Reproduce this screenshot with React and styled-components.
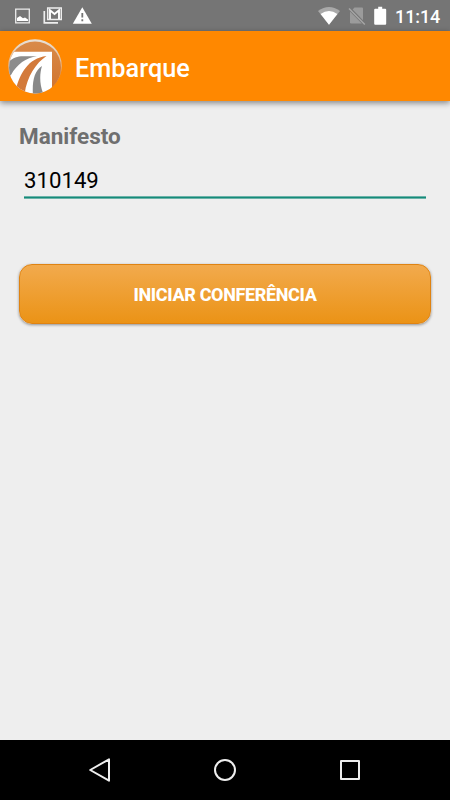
import styled, { createGlobalStyle } from 'styled-components';

const GlobalStyle = createGlobalStyle`
    * {
        box-sizing: border-box;
    }

    body {
        margin: 0;
        background: #eee;
        font-family: Roboto, sans-serif;
    }
`;

const Screen = styled.div`
    display: flex;
    flex-direction: column;
    height: 100vh;
    background: #eee;
`;

const StatusBar = styled.div`
    display: flex;
    justify-content: space-between;
    flex: none;
    height: 31px;
    padding: 0 10px 0 12px;
    background: #757575;
`;

const StatusGroup = styled.div`
    display: flex;
    align-items: center;
    gap: ${({ $gap }) => $gap}px;
`;

const Clock = styled.span`
    width: 45px;
    color: #fff;
    font-size: 18px;
    font-weight: 500;
    line-height: 31px;
    letter-spacing: -0.1px;
    padding-top: 2px;
`;

const AppBar = styled.header`
    display: flex;
    align-items: center;
    flex: none;
    gap: 13px;
    height: 70px;
    padding: 2px 8px 0;
    background: #ff8800;
    box-shadow: 0 2px 6px rgba(0, 0, 0, 0.45);
`;

const Title = styled.h1`
    margin: 4px 0 0;
    color: #fff;
    font-size: 25.3px;
    font-weight: 500;
    line-height: 30px;
`;

const Content = styled.main`
    display: flex;
    flex-direction: column;
    flex: 1;
    padding: 21px 19px 0;
`;

const Label = styled.label`
    color: #6f6f6f;
    font-size: 22.5px;
    font-weight: 700;
    line-height: 28px;
`;

const Input = styled.input`
    height: 37px;
    margin: 12px 5px 0;
    padding: 0 0 1px;
    border: 0;
    outline: 0;
    background: linear-gradient(#6bb3a9 1px, #158a79 1px 2px, #6bb3a9 2px) bottom / 100% 3px no-repeat;
    color: #000;
    font-family: inherit;
    font-size: 22.2px;
`;

const Button = styled.button`
    height: 60px;
    margin-top: 65px;
    padding: 0;
    border: 1px solid #df8312;
    border-radius: 13px;
    background: linear-gradient(#f2aa4d, #eb9316);
    box-shadow: 0 1px 3px rgba(0, 0, 0, 0.4);
    color: #fff;
    font-family: inherit;
    font-size: 18px;
    font-weight: 800;
    letter-spacing: -0.35px;
`;

const NavBar = styled.nav`
    display: flex;
    align-items: center;
    justify-content: center;
    flex: none;
    gap: 101px;
    height: 60px;
    background: #000;
`;

const Logo = () => (
    <svg width="54" height="58" viewBox="0 0 54 58">
        <defs>
            <clipPath id="disc">
                <circle cx="27" cy="29.5" r="26" />
            </clipPath>
            <linearGradient id="copper" x1="0" y1="0" x2="0" y2="1">
                <stop offset="0" stopColor="#d98c4c" />
                <stop offset="1" stopColor="#d0712a" />
            </linearGradient>
            <linearGradient id="rim" x1="0" y1="0" x2="0" y2="1">
                <stop offset="0" stopColor="#e8e2da" />
                <stop offset="0.7" stopColor="#dfa26b" />
            </linearGradient>
        </defs>
        <circle cx="27" cy="28" r="26.8" fill="url(#rim)" />
        <g clipPath="url(#disc)">
            <rect width="54" height="58" fill="url(#copper)" />
            <path d="M0 13.7H44V58H0Z" fill="#fff" />
            <path d="M0 25C4 20 9 18.3 15 18.3H29C18 20 9 26 3 37L0 38Z" fill="#8c8c8c" />
            <path d="M8 51C12 36 20 20 38.5 18C28 25 18.5 39 16.5 57Z" fill="#d37a3b" />
            <path d="M25 58C24 44 26 33 34 28C31.5 36 31.5 46 35 55V58Z" fill="#888" />
        </g>
    </svg>
);

const PictureIcon = () => (
    <svg width="20" height="20" viewBox="0 0 20 20">
        <path d="M3.7 3.2H17.3V16.8H3.7Z" fill="none" stroke="#ececec" strokeWidth="1.3" />
        <path d="M5 15V12L8 10L11 12.2L13 11.5L16 13.5V15Z" fill="#fff" />
    </svg>
);

const MailIcon = () => (
    <svg width="20" height="20" viewBox="0 0 20 20">
        <path d="M2.3 5V16.8H16" fill="none" stroke="#eee" strokeWidth="1.7" />
        <path d="M5.7 2H19.3V13.5H5.7Z" fill="none" stroke="#eee" strokeWidth="1.5" />
        <path d="M8 13V4.2L12.5 8L17 4.2V13" fill="none" stroke="#fff" strokeWidth="1.9" />
    </svg>
);

const WarningIcon = () => (
    <svg width="20" height="20" viewBox="0 0 20 20">
        <path d="M10.3 1.3L19.8 17.7H.8Z" fill="#fff" />
        <path d="M10.3 7V11.5M10.3 13.2V15.2" stroke="#757575" strokeWidth="1.8" />
    </svg>
);

const WifiIcon = () => (
    <svg width="22" height="20" viewBox="0 0 22 20">
        <path d="M0 5Q11-3 22 5L11 18.8Z" fill="#a9a9a9" />
        <path d="M2.6 8Q11 2.2 19.4 8L11 18.8Z" fill="#fff" />
    </svg>
);

const NoSimIcon = () => (
    <svg width="18" height="20" viewBox="0 0 18 20">
        <path d="M6.5 1.5H14Q15 1.5 15 2.5V14.2L4.6 3.4Z" fill="#9b9b9b" />
        <path d="M2 5.6L13.8 17.5H3.2Q2 17.5 2 16.3Z" fill="#9b9b9b" />
        <path d="M1 2.6L16.8 18.6" stroke="#a6a6a6" strokeWidth="1.4" />
    </svg>
);

const BatteryIcon = () => (
    <svg width="13" height="20" viewBox="0 0 13 20">
        <path d="M4.2 .7H8.2V2.7H11.2Q12.2 2.7 12.2 3.7V17.8Q12.2 18.8 11.2 18.8H1.2Q.2 18.8 .2 17.8V3.7Q.2 2.7 1.2 2.7H4.2Z" fill="#fff" />
    </svg>
);

const NavIcon = ({ children }) => (
    <svg width="24" height="24" viewBox="0 0 24 24" fill="none" stroke="#eee" strokeWidth="2" strokeLinejoin="round">
        {children}
    </svg>
);

const App = () => {
    return (
        <Screen>
            <GlobalStyle />
            <StatusBar>
                <StatusGroup $gap={10}>
                    <PictureIcon />
                    <MailIcon />
                    <WarningIcon />
                </StatusGroup>
                <StatusGroup $gap={8}>
                    <WifiIcon />
                    <NoSimIcon />
                    <BatteryIcon />
                    <Clock>11:14</Clock>
                </StatusGroup>
            </StatusBar>

            <AppBar>
                <Logo />
                <Title>Embarque</Title>
            </AppBar>

            <Content>
                <Label htmlFor="manifesto">Manifesto</Label>
                <Input id="manifesto" defaultValue="310149" />
                <Button>INICIAR CONFERÊNCIA</Button>
            </Content>

            <NavBar>
                <NavIcon>
                    <path d="M21 1.3V22.7L2.2 12Z" />
                </NavIcon>
                <NavIcon>
                    <circle cx="12" cy="12" r="10" />
                </NavIcon>
                <NavIcon>
                    <path d="M3 3H21V21H3Z" />
                </NavIcon>
            </NavBar>
        </Screen>
    );
};

export default App;
